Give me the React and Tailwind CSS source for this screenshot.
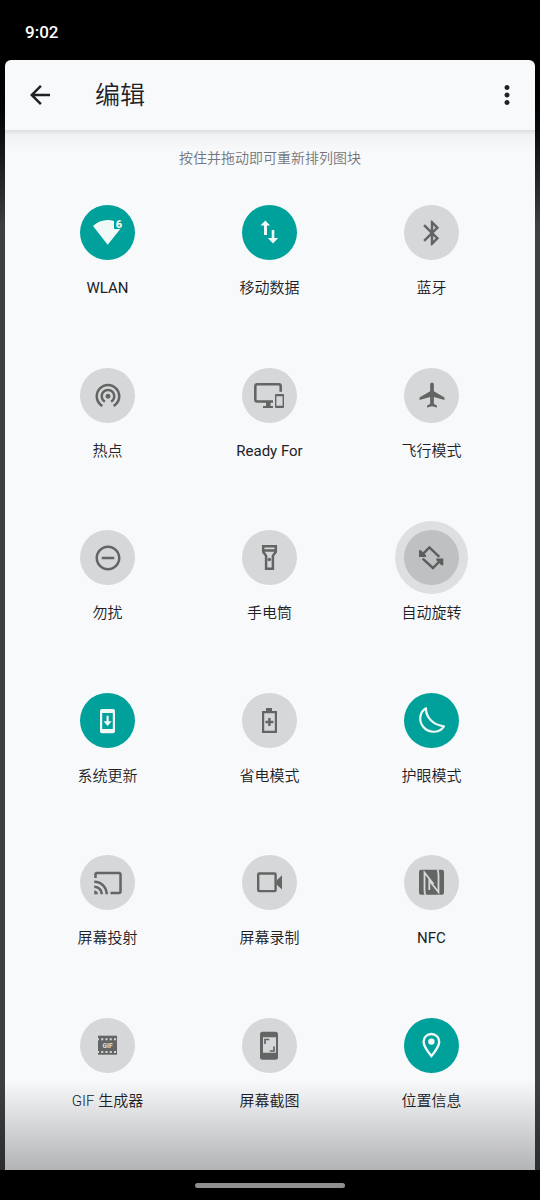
import { useState } from "react";
import {
  MdAirplanemodeActive,
  MdArrowBack,
  MdBluetooth,
  MdCast,
  MdMoreVert,
  MdRemoveCircleOutline,
  MdWifiTethering,
} from "react-icons/md";

// Drawings use the 55px tile circle as their canvas
function TileSvg({ children }) {
  return (
    <svg viewBox="0 0 55 55" className="w-full h-full" fill="currentColor" aria-hidden="true">
      {children}
    </svg>
  );
}

const WifiIcon = () => (
  <TileSvg>
    <path d="M27.7 39.7 13 21c4-4 9-6 14.7-6 2.2 0 4.3.3 6.3.9V24h6.3z" />
    <text x="35.7" y="22.9" fontSize="11" fontWeight="900" fontFamily="Roboto, sans-serif">
      6
    </text>
  </TileSvg>
);

const DataIcon = () => (
  <TileSvg>
    <path d="m23.3 15.5 4.8 5.1H25V30h-3v-9.4h-3.5z" />
    <path d="M29.7 25h2.6v8h3.9L31 38.6 25.8 33h3.9z" />
  </TileSvg>
);

const ReadyForIcon = () => (
  <TileSvg>
    <path d="M38.7 23.7v-5.4q0-2-2-2H15.3q-2 0-2 2v13.2q0 2 2 2H31" fill="none" stroke="currentColor" strokeWidth="2.6" />
    <path d="M24 34h4.6v4H31v2H21v-2h3z" />
    <path fillRule="evenodd" d="M34 26h7q1 0 1 1v12q0 1-1 1h-7q-1 0-1-1V27q0-1 1-1zm.4 2.3v9.4h6.2v-9.4z" />
  </TileSvg>
);

const FlashlightIcon = () => (
  <TileSvg>
    <path
      d="M21.2 16.2h12.6v5.6l-2.9 4v13h-6.8v-13l-2.9-4zM21 20.4h13"
      fill="none"
      stroke="currentColor"
      strokeWidth="2.5"
    />
    <circle cx="27.3" cy="29.5" r="1.8" />
  </TileSvg>
);

const RotateIcon = () => (
  <TileSvg>
    <path d="m18.5 24.3 6.9-6.9 9.9 9.4M18.7 28.6l10.2 9.4 7-7" fill="none" stroke="currentColor" strokeWidth="2.4" />
    <path d="M15 20.2h2l5 5V27h-7zM39.3 35.3h-2l-5-5v-1.8h7z" />
  </TileSvg>
);

const UpdateIcon = () => (
  <TileSvg>
    <path fillRule="evenodd" d="M22 16h11q2 0 2 2v20.3q0 2-2 2H22q-2 0-2-2V18q0-2 2-2zm.2 4v16h10.6V20z" />
    <path d="M26.5 22.7h2.2v5.6h3L27.6 33l-4.1-4.7h3z" />
  </TileSvg>
);

const BatteryIcon = () => (
  <TileSvg>
    <path fillRule="evenodd" d="M24 15h6v3h5v22H20V18h4zm-1.8 5.2v17.6h10.6V20.2z" />
    <path d="M26.2 25h2.4v2.8h2.8v2.4h-2.8V33h-2.4v-2.8h-2.8v-2.4h2.8z" />
  </TileSvg>
);

const MoonIcon = () => (
  <TileSvg>
    <path
      d="M22 15.3c-6.5 3.7-7.5 12.2-3 18.2 5.5 7 16 7 21-.2C30 32 21.5 25 22 15.3z"
      fill="none"
      stroke="currentColor"
      strokeWidth="2.2"
      strokeLinejoin="round"
    />
  </TileSvg>
);

const CameraIcon = () => (
  <TileSvg>
    <rect x="16.2" y="18.5" width="17.4" height="17.6" rx="1" fill="none" stroke="currentColor" strokeWidth="2.4" />
    <path d="M34.5 25.5 40 20.3v14.3l-5.5-5.2z" />
  </TileSvg>
);

const NfcIcon = () => (
  <TileSvg>
    <rect x="15" y="14.7" width="25" height="25" rx="2" />
    <path
      d="M21.5 40q-1-2-1-5V17.5l9 11.5M33.5 14.5q1 2 1 5v17.7L25.3 25.5V35"
      fill="none"
      stroke="#d6d7d9"
      strokeWidth="1.8"
    />
  </TileSvg>
);

const GifIcon = () => (
  <TileSvg>
    <rect x="18" y="17.7" width="19" height="19" />
    <path d="M18 21.3h19M18 34h19" stroke="#d6d7d9" strokeWidth="2" strokeDasharray="2 2.25" strokeDashoffset="1" />
    <text x="27.5" y="29.9" fontSize="6.5" fontWeight="900" textAnchor="middle" fill="#d6d7d9" fontFamily="Roboto, sans-serif">
      GIF
    </text>
  </TileSvg>
);

const ScreenshotIcon = () => (
  <TileSvg>
    <path
      fillRule="evenodd"
      d="M20.5 13.7h13q2.5 0 2.5 2.5v23q0 2.5-2.5 2.5h-13q-2.5 0-2.5-2.5v-23q0-2.5 2.5-2.5zM21 19.3v15.4h13V19.3z"
    />
    <path d="M23 26v-4.5h4.3M32 28.5V33h-4.3" fill="none" stroke="currentColor" strokeWidth="1.7" />
  </TileSvg>
);

const PlaceIcon = () => (
  <TileSvg>
    <path
      d="M27.4 16c-4.500 0-7.800 3.400-7.800 7.700 0 4.800 4.300 10 7.800 14.400 3.500-4.400 7.800-9.600 7.800-14.400 0-4.300-3.300-7.700-7.800-7.700z"
      fill="none"
      stroke="currentColor"
      strokeWidth="2.4"
    />
    <circle cx="27.4" cy="23.6" r="3.200" />
  </TileSvg>
);

const TILES = [
  { label: "WLAN", icon: WifiIcon, on: true, latin: true },
  { label: "移动数据", icon: DataIcon, on: true },
  { label: "蓝牙", icon: MdBluetooth, size: 30 },
  { label: "热点", icon: MdWifiTethering, size: 30 },
  { label: "Ready For", icon: ReadyForIcon, latin: true },
  { label: "飞行模式", icon: MdAirplanemodeActive, size: 30 },
  { label: "勿扰", icon: MdRemoveCircleOutline, size: 30 },
  { label: "手电筒", icon: FlashlightIcon },
  { label: "自动旋转", icon: RotateIcon },
  { label: "系统更新", icon: UpdateIcon, on: true },
  { label: "省电模式", icon: BatteryIcon },
  { label: "护眼模式", icon: MoonIcon, on: true },
  { label: "屏幕投射", icon: MdCast, size: 30 },
  { label: "屏幕录制", icon: CameraIcon },
  { label: "NFC", icon: NfcIcon, latin: true },
  { label: "GIF 生成器", icon: GifIcon },
  { label: "屏幕截图", icon: ScreenshotIcon },
  { label: "位置信息", icon: PlaceIcon, on: true },
];

function Tile({ tile, selected, onSelect }) {
  const Icon = tile.icon;
  let circle = "bg-[#d6d7d9] text-[#636564]";
  if (tile.on) circle = "bg-[#00a19a] text-[#f1f8f8]";
  if (selected) circle = "bg-[#bfc0c1] text-[#5c5e5d] ring-9 ring-[#dedfe1]";

  return (
    <button
      type="button"
      onClick={onSelect}
      className="pt-[15px] flex flex-col items-center justify-start gap-[18px] focus:outline-none"
    >
      <span className={`w-[55px] h-[55px] rounded-full flex items-center justify-center ${circle}`}>
        <Icon size={tile.size} />
      </span>
      <span className={`text-[15px] leading-5 text-[#202124] whitespace-nowrap ${tile.latin ? "font-normal" : ""}`}>
        {tile.label}
      </span>
    </button>
  );
}

export default function App() {
  const [selected, setSelected] = useState("自动旋转");

  return (
    <div className="min-h-screen flex flex-col bg-black font-[350] font-[Roboto,'Noto_Sans_CJK_SC',sans-serif]">
      {/* Status bar */}
      <div className="h-15 px-[25px] pt-1.5 flex items-center text-[17px] font-medium text-white">9:02</div>

      <div className="relative flex-1 flex flex-col px-[5px] bg-linear-to-b from-black via-[#3c4043] via-15% to-[#3c4043]">
        <main className="flex-1 flex flex-col rounded-t-md bg-[#f8f9fb]">
          {/* Title bar */}
          <header className="h-[70px] pl-5 pr-[13px] flex items-center text-[#202124]">
            <button type="button" aria-label="返回">
              <MdArrowBack size={30} />
            </button>
            <h1 className="flex-1 pl-10 pt-0.5 text-[25px] font-[350]">编辑</h1>
            <button type="button" aria-label="更多选项">
              <MdMoreVert size={30} />
            </button>
          </header>

          <div className="h-[60px] pt-[18px] bg-linear-to-b from-[#dcdde0] via-[#f1f2f4] via-8% to-[#f8f9fb] to-35%">
            <p className="text-center text-sm text-[#737579]">按住并拖动即可重新排列图块</p>
          </div>

          {/* Tiles */}
          <div className="flex-1 grid grid-cols-3 auto-rows-fr gap-x-px pl-[22px] pr-[23px] mb-[5px]">
            {TILES.map((tile) => (
              <Tile
                key={tile.label}
                tile={tile}
                selected={tile.label === selected}
                onSelect={() => setSelected(tile.label)}
              />
            ))}
          </div>
        </main>

        {/* Bottom scrim */}
        <div className="absolute inset-x-0 bottom-0 h-[90px] bg-linear-to-b from-transparent to-black/28 pointer-events-none" />
      </div>

      {/* Gesture bar */}
      <div className="h-[30px] flex items-center justify-center">
        <div className="w-[150px] h-[5px] rounded-full bg-[#8f8f8f]" />
      </div>
    </div>
  );
}
